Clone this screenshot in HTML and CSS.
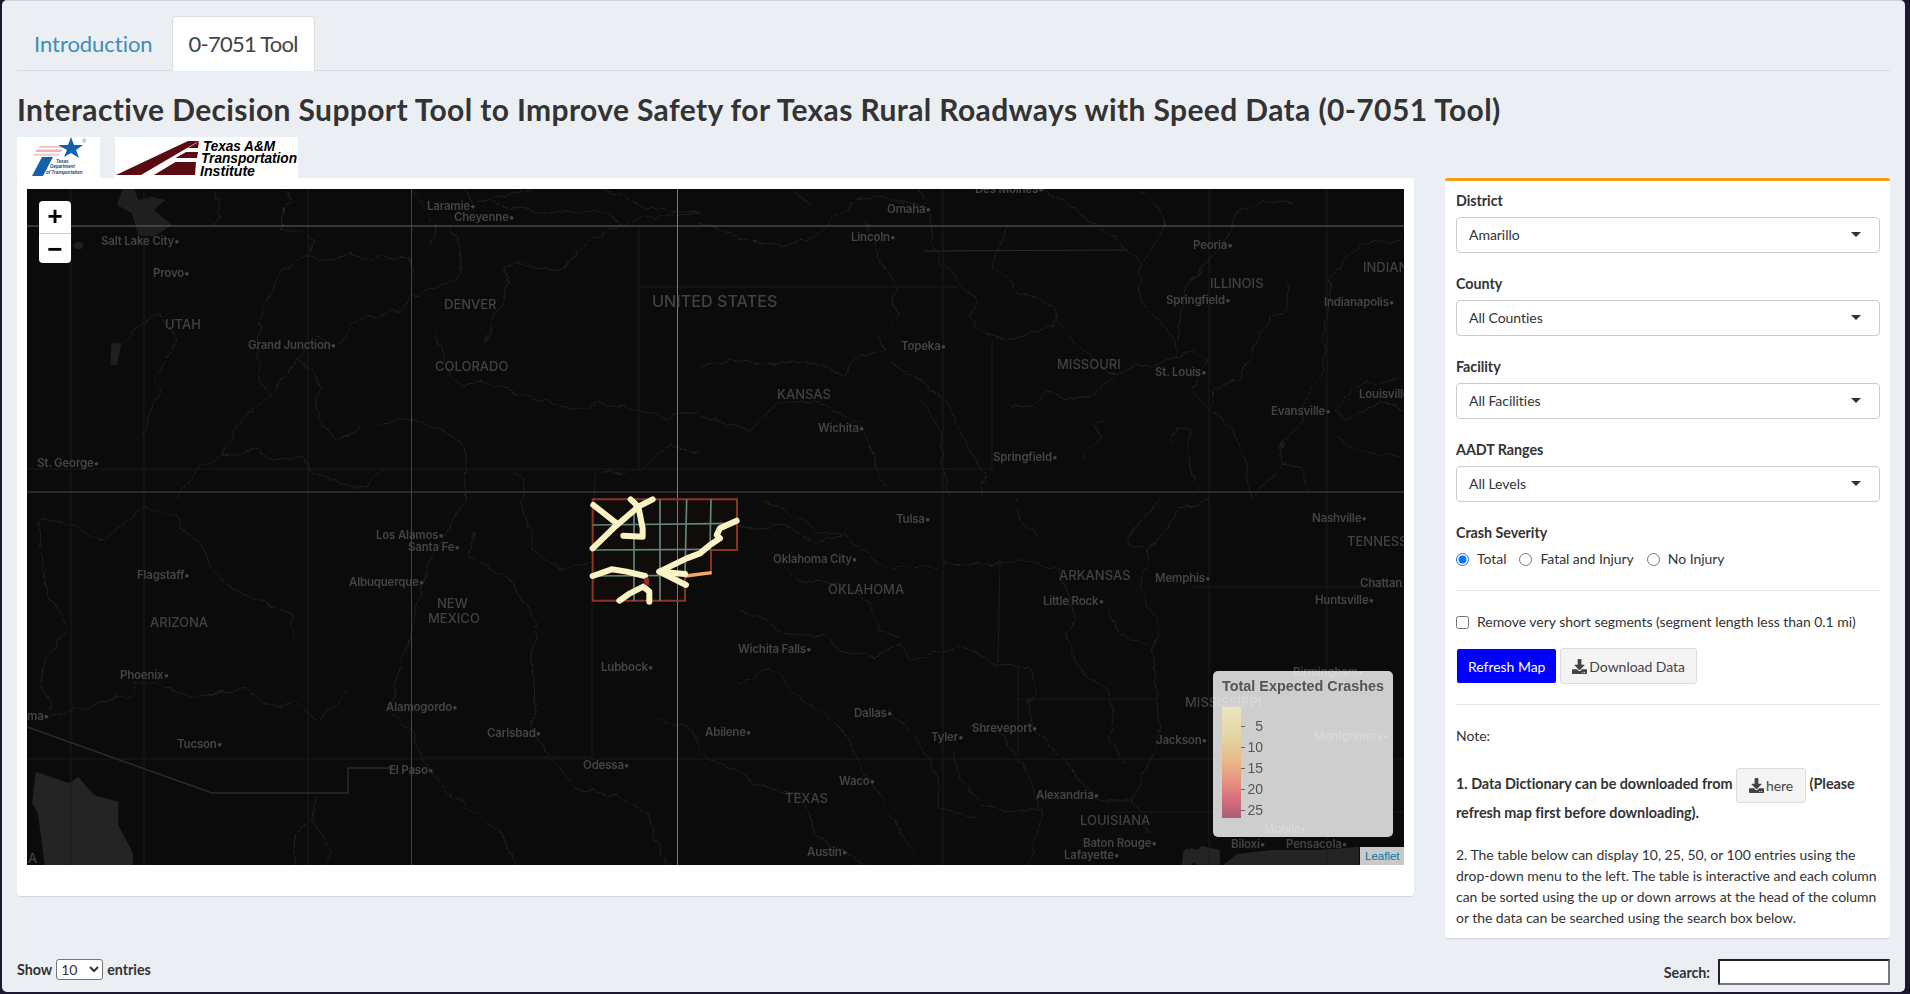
FILE: index.html
```html
<!DOCTYPE html>
<html lang="en">
<head>
<meta charset="utf-8">
<title>0-7051 Tool</title>
<link rel="stylesheet" href="styles.css">
</head>
<body>
<svg class="defs" width="0" height="0" aria-hidden="true">
  <symbol id="dl" viewBox="0 0 512 512"><path d="M216 0h80c13.3 0 24 10.7 24 24v168h87.7c17.8 0 26.7 21.5 14.1 34.1L269.7 378.3c-7.5 7.5-19.8 7.5-27.3 0L90.1 226.1c-12.6-12.6-3.7-34.1 14.1-34.1H192V24c0-13.3 10.7-24 24-24zm296 376v112c0 13.3-10.7 24-24 24H24c-13.3 0-24-10.7-24-24V376c0-13.3 10.7-24 24-24h146.7l49 49c20.1 20.1 52.5 20.1 72.6 0l49-49H488c13.3 0 24 10.7 24 24zm-124 88c0-11-9-20-20-20s-20 9-20 20 9 20 20 20 20-9 20-20zm64 0c0-11-9-20-20-20s-20 9-20 20 9 20 20 20 20-9 20-20z"/></symbol>
</svg>
<div class="app">
  <nav class="tabs">
    <a class="tab">Introduction</a>
    <a class="tab active">0-7051 Tool</a>
  </nav>
  <h1 class="title">Interactive Decision Support Tool to Improve Safety for Texas Rural Roadways with Speed Data (0-7051 Tool)</h1>
  <div class="logos">
    <svg class="logo-tx" viewBox="0 0 83 41" width="83" height="41">
      <path class="tx-s1" d="M24 9h24l-2 2H20z"/>
      <path class="tx-s2" d="M20 12.500h26l-2 2.500H18z"/>
      <path class="tx-s3" d="M17 16.500h26l-1 2.500H16z"/>
      <polygon class="tx-blue" points="54,0 57,8 66,8 59,13 62,21 54,16 47,20 50,13 41,8 51,8"/>
      <polygon class="tx-blue" points="25,20 36,20 26,39 15,39"/>
      <text class="tx-r" x="65" y="6">®</text>
      <text class="tx-t" x="39" y="25.500">Texas</text>
      <text class="tx-t" x="33" y="31">Department</text>
      <text class="tx-t" x="29" y="37">of Transportation</text>
    </svg>
    <svg class="logo-tti" viewBox="0 0 183 41" width="183" height="41">
      <polygon class="tti-m" points="1,38 26,38 84,4 73,4"/>
      <polygon class="tti-m" points="39,38 80,38 81,25 60.500,25"/>
      <polygon class="tti-m" points="60.500,21 82,21 83,15 71,15"/>
      <polygon class="tti-m" points="73,11 83,11 84,4 80,7"/>
      <text class="tti-t" x="88" y="14" textLength="72" lengthAdjust="spacingAndGlyphs">Texas A&amp;M</text>
      <text class="tti-t" x="86" y="26" textLength="96" lengthAdjust="spacingAndGlyphs">Transportation</text>
      <text class="tti-t" x="85" y="39" textLength="55" lengthAdjust="spacingAndGlyphs">Institute</text>
    </svg>
  </div>
  <div class="main">
    <section class="card">
      <div class="map">
        <svg class="map-svg" viewBox="27 189 1377 676" width="1377" height="676">
          <defs>
            <filter id="wiggle" filterUnits="userSpaceOnUse" x="27" y="189" width="1377" height="676">
              <feTurbulence type="fractalNoise" baseFrequency="0.07" numOctaves="3" seed="4"/>
              <feDisplacementMap in="SourceGraphic" scale="9" xChannelSelector="R" yChannelSelector="G"/>
            </filter>
          </defs>
          <g class="fills">
            <g transform="translate(0,180) scale(.4464,.3333)">
              <path class="lake" d="M275 27 L262 75 L295 100 L310 165 L345 170 L385 135 L345 90 L370 60 L340 50 L310 60 L300 27Z"/>
              <circle class="lake" cx="176" cy="197" r="11"/>
              <path class="lake" d="M250 490 L272 490 L262 555 L247 555Z"/>
            </g>
            <g transform="translate(0,500) scale(.4464,.3333)">
              <path d="M80 815 L155 850 L175 830 L210 885 L265 905 L265 975 L298 1060 L298 1095 L100 1095 L85 940 L72 910Z"/>
            </g>
            <g transform="translate(1180,650) scale(.3333)">
              <path d="M130 645 L170 612 L280 600 L420 600 L537 590 L537 645Z"/>
              <path d="M10 612 L30 595 L55 600 L60 630 L30 645 L5 645Z"/>
            </g>
            <g transform="translate(700,500) scale(.3333)">
              <path d="M1470 1070 L1505 1038 L1560 1050 L1560 1094 L1490 1094Z"/>
              <path d="M1447 1060 L1460 1045 L1472 1055 L1460 1072Z"/>
            </g>
          </g>
          <g class="rivers" filter="url(#wiggle)">
            <g transform="translate(0,180) scale(.4464,.3333)">
              <polyline points="690,225 635,270 600,350 583,420 575,530 590,610 603,650"/>
              <polyline points="690,225 710,235 740,240 785,222 830,245 860,228 920,235 928,265 925,300"/>
              <polyline points="480,30 490,110 480,135"/>
              <polyline points="640,30 650,60 635,90 635,130 630,150 670,155 705,180 700,220"/>
              <polyline points="1030,295 975,320 945,350 920,345 900,395 830,405 790,430 770,480 745,497 705,470 665,540 610,640 545,710 515,780 495,830 440,870 395,955"/>
              <polyline points="665,540 700,570 715,620 705,650 715,720 750,780 800,750 810,730"/>
              <polyline points="360,400 320,430 275,490"/>
              <polyline points="360,400 395,480 350,590 355,640 330,720 325,770"/>
              <polyline points="1130,270 1160,245 1200,265 1250,272 1300,210 1330,170 1430,115 1568,100"/>
              <polyline points="1130,270 1140,310 1110,400 1085,490"/>
              <polyline points="1010,135 1030,200 1030,295"/>
              <polyline points="920,30 975,130 965,200"/>
              <polyline points="975,460 1010,590 1040,620 1075,600 1180,645 1275,690 1340,670 1500,710 1568,690"/>
              <polyline points="850,730 920,720 1000,755 1045,800 1040,960"/>
              <polyline points="495,830 570,810 610,840 680,830 695,880 770,915 820,920 865,865"/>
              <polyline points="1145,880 1175,890 1170,960"/>
              <polyline points="1350,30 1470,90 1568,100"/>
              <polyline points="1040,30 1060,70 1190,30"/>
              <polyline points="1100,70 1220,100 1340,90 1400,135"/>
              <polyline points="1340,880 1430,870 1500,790 1568,820"/>
            </g>
            <g transform="translate(700,180) scale(.4592,.3333)">
              <polyline points="480,30 505,120 510,200 525,250 590,345 605,370 585,410 620,465 660,480 770,440 780,420 770,380 700,340 640,260 650,200 675,140"/>
              <polyline points="205,30 240,85"/>
              <polyline points="0,125 100,180 180,200 260,160 340,60 400,50 490,80"/>
              <polyline points="780,420 815,490 860,530 890,585 945,560 985,565 1040,530 1075,515 1100,540 1070,630 1110,690 1165,750 1190,860 1200,960"/>
              <polyline points="1040,530 1030,470 960,370 955,280 965,255 1010,135 1005,100 960,30"/>
              <polyline points="965,255 900,170 790,60 740,30"/>
              <polyline points="1040,480 1050,380 1060,320 1150,170 1175,80 1290,60"/>
              <polyline points="1280,310 1280,390 1240,410 1200,520 1170,600 1120,630 1110,690"/>
              <polyline points="1533,180 1440,190 1370,300 1375,350 1355,480 1360,570 1320,640 1310,720 1265,800 1270,850 1200,960"/>
              <polyline points="1270,850 1310,860 1320,930"/>
              <polyline points="0,560 60,540 140,550 260,550 315,590 335,535 405,510 390,465"/>
              <polyline points="415,545 520,640 550,700 580,790 620,880 610,950"/>
              <polyline points="415,440 435,400 420,370 430,320 395,250 365,130"/>
              <polyline points="0,705 110,750 170,670 250,665 350,730 370,800 390,880 405,920"/>
              <polyline points="480,660 525,750 530,880 540,950"/>
              <polyline points="675,680 720,685 755,640 820,660 850,650 900,590"/>
              <polyline points="880,710 860,730 870,780 830,835"/>
              <polyline points="1025,790 1040,740 1070,750 1060,820 1085,930"/>
              <polyline points="1533,600 1440,610 1380,690 1410,720 1480,660 1533,690"/>
              <polyline points="1380,760 1430,810 1533,830"/>
            </g>
            <g transform="translate(0,500) scale(.4464,.3333)">
              <polyline points="1165,0 1190,100 1190,150 1250,205 1330,190"/>
              <polyline points="1060,95 1050,170 1150,250 1205,370 1190,470 1195,650 1190,680 1230,770 1290,860 1380,890 1450,940 1470,1020 1490,1095"/>
              <polyline points="1040,0 960,190 920,400 885,560 875,640 920,690 950,790 1000,870 1080,960 1130,1000 1155,1095"/>
              <polyline points="85,65 105,280 150,380 100,480 90,550 115,620 100,655"/>
              <polyline points="85,65 120,60 160,70 230,125 320,20 395,50 410,90 450,130 470,200 520,265 610,320 655,340 660,420"/>
              <polyline points="115,650 200,620 270,590 300,600 300,550 350,545 430,595 545,565 625,630 660,605 710,660 780,575"/>
              <polyline points="1470,660 1540,680 1568,740"/>
              <polyline points="710,890 700,960 660,1000 660,1095"/>
              <polyline points="700,960 740,1050 735,1095"/>
            </g>
            <g transform="translate(700,500) scale(.3333)">
              <polyline points="110,330 200,355 240,400 380,405 420,450 520,470 600,430 635,480 790,440 900,495 990,500 1005,570 985,600 1000,680 1100,790"/>
              <polyline points="110,80 170,85 260,75 340,130 430,105 490,155 550,200 690,200 740,200"/>
              <polyline points="190,0 310,60 350,90 430,105"/>
              <polyline points="220,155 290,240 430,250 510,310 540,390 600,410"/>
              <polyline points="730,190 830,190 900,195 960,180 1080,210 1130,360 1100,400 1130,500 1225,570 1240,650 1230,720 1275,790"/>
              <polyline points="1530,0 1440,30 1350,150 1320,260 1380,380 1360,450 1370,600 1380,700 1340,800 1300,900 1350,1000"/>
              <polyline points="1220,330 1260,400 1350,440"/>
              <polyline points="110,550 210,505 300,590 420,680 480,790 530,870 600,990 660,1094"/>
              <polyline points="560,630 660,730 720,840 710,920 830,960"/>
              <polyline points="0,760 100,810 180,860 300,880 335,960 340,1000 400,1040 490,1094"/>
              <polyline points="760,760 780,830 840,910 940,930 1030,930 990,1094"/>
              <polyline points="810,680 910,710 950,770 1000,850 1020,930"/>
              <polyline points="1100,790 1190,900 1290,900"/>
              <polyline points="950,0 960,60 1010,110"/>
              <polyline points="1380,0 1270,120 1340,150"/>
            </g>
          </g>
          <g class="borders">
            <polyline points="639,226 639,469"/>
            <polyline points="639,287 957,287"/>
            <polyline points="27,469 992,469 992,340"/>
            <polyline points="595,469 592,600"/>
            <polyline points="592,600 592,757 423,757"/>
            <polyline points="71,189 71,865"/>
            <polyline points="144,189 144,865"/>
            <polyline points="308,189 308,865"/>
            <polyline points="943,189 943,865"/>
            <polyline points="1209,189 1209,865"/>
            <polyline points="1327,189 1327,865"/>
            <polyline points="1000,560 998,663"/>
            <polyline points="1018,667 1018,757"/>
            <polyline points="1018,699 1155,699"/>
            <polyline points="1113,812 1404,812"/>
            <polyline points="27,759 1404,759"/>
            <polyline points="1192,587 1404,587"/>
          </g>
          <polyline class="border-hi" points="924,251 1127,250"/>
          <polyline class="mexico" points="27,727 212,793 348,793 348,768 393,768"/>
          <line class="grid-a" x1="27" y1="226" x2="1404" y2="226"/>
          <line class="grid-b" x1="27" y1="492" x2="1404" y2="492"/>
          <line class="grid-c" x1="411.500" y1="189" x2="411.500" y2="865"/>
          <line class="grid-d" x1="677.500" y1="189" x2="677.500" y2="865"/>

          <g class="city">
            <text x="975" y="193">Des Moines•</text>
            <text x="101" y="245">Salt Lake City•</text>
            <text x="153" y="277">Provo•</text>
            <text x="427" y="210">Laramie•</text>
            <text x="454" y="221">Cheyenne•</text>
            <text x="248" y="349">Grand Junction•</text>
            <text x="37" y="467">St. George•</text>
            <text x="887" y="213">Omaha•</text>
            <text x="851" y="241">Lincoln•</text>
            <text x="1193" y="249">Peoria•</text>
            <text x="1166" y="304">Springfield•</text>
            <text x="1324" y="306">Indianapolis•</text>
            <text x="901" y="350">Topeka•</text>
            <text x="1155" y="376">St. Louis•</text>
            <text x="818" y="432">Wichita•</text>
            <text x="1359" y="398">Louisville</text>
            <text x="1271" y="415">Evansville•</text>
            <text x="993" y="461">Springfield•</text>
            <text x="896" y="523">Tulsa•</text>
            <text x="773" y="563">Oklahoma City•</text>
            <text x="1155" y="582">Memphis•</text>
            <text x="1043" y="605">Little Rock•</text>
            <text x="738" y="653">Wichita Falls•</text>
            <text x="854" y="717">Dallas•</text>
            <text x="705" y="736">Abilene•</text>
            <text x="972" y="732">Shreveport•</text>
            <text x="931" y="741">Tyler•</text>
            <text x="1156" y="744">Jackson•</text>
            <text x="839" y="785">Waco•</text>
            <text x="1036" y="799">Alexandria•</text>
            <text x="1083" y="847">Baton Rouge•</text>
            <text x="1064" y="859">Lafayette•</text>
            <text x="807" y="856">Austin•</text>
            <text x="1293" y="676">Birmingham•</text>
            <text x="1314" y="740">Montgomery•</text>
            <text x="1264" y="833">Mobile•</text>
            <text x="1231" y="848">Biloxi•</text>
            <text x="1286" y="848">Pensacola•</text>
            <text x="1312" y="522">Nashville•</text>
            <text x="1360" y="587">Chattan</text>
            <text x="1315" y="604">Huntsville•</text>
            <text x="376" y="539">Los Alamos•</text>
            <text x="408" y="551">Santa Fe•</text>
            <text x="137" y="579">Flagstaff•</text>
            <text x="349" y="586">Albuquerque•</text>
            <text x="120" y="679">Phoenix•</text>
            <text x="601" y="671">Lubbock•</text>
            <text x="386" y="711">Alamogordo•</text>
            <text x="487" y="737">Carlsbad•</text>
            <text x="27" y="720">ma•</text>
            <text x="177" y="748">Tucson•</text>
            <text x="389" y="774">El Paso•</text>
            <text x="583" y="769">Odessa•</text>
          </g>
          <g class="state">
            <text x="165" y="329">UTAH</text>
            <text x="444" y="309">DENVER</text>
            <text x="435" y="371">COLORADO</text>
            <text x="1363" y="272">INDIANA</text>
            <text x="1210" y="288">ILLINOIS</text>
            <text x="1057" y="369">MISSOURI</text>
            <text x="777" y="399">KANSAS</text>
            <text x="828" y="594">OKLAHOMA</text>
            <text x="1059" y="580">ARKANSAS</text>
            <text x="785" y="803">TEXAS</text>
            <text x="1080" y="825">LOUISIANA</text>
            <text x="1185" y="707">MISSISSIPPI</text>
            <text x="1347" y="546">TENNESS</text>
            <text x="437" y="608">NEW</text>
            <text x="428" y="623">MEXICO</text>
            <text x="150" y="627">ARIZONA</text>
            <text x="28" y="863">A</text>
            <text class="country" x="652" y="307">UNITED STATES</text>
          </g>

          <g transform="translate(560,470) scale(.3333)">
            <g class="ov-red">
              <polygon points="98,88 531,88 531,240 453,240 453,310 375,320 375,392 98,392"/>
            </g>
            <g class="ov-green">
              <line x1="98" y1="165" x2="531" y2="160"/>
              <line x1="98" y1="240" x2="453" y2="238"/>
              <line x1="98" y1="318" x2="375" y2="316"/>
              <line x1="222" y1="88" x2="222" y2="392"/>
              <line x1="300" y1="88" x2="300" y2="392"/>
              <line x1="380" y1="88" x2="375" y2="320"/>
              <line x1="453" y1="88" x2="450" y2="240"/>
            </g>
            <polyline class="ov-orange" points="375,318 455,308"/>
            <g class="ov-yellow">
              <polyline points="98,235 165,170 235,110 278,88"/>
              <polyline points="100,105 170,160"/>
              <polyline points="212,88 235,110 248,175 248,200 190,197"/>
              <polyline points="530,152 480,175 470,195 480,205 450,225 420,250 380,265 298,305 375,312"/>
              <polyline points="298,305 378,345"/>
              <polyline points="98,318 155,298 200,305 255,318"/>
              <polyline points="178,392 210,370 250,350 268,365 268,395"/>
            </g>
            <line class="ov-dot" x1="260" y1="330" x2="260" y2="338"/>
          </g>
        </svg>
        <div class="zoom-ctl">
          <span class="zoom-btn">+</span>
          <span class="zoom-btn">−</span>
        </div>
        <div class="legend">
          <div class="legend-title">Total Expected Crashes</div>
          <div class="legend-body">
            <div class="legend-bar"></div>
            <ul class="legend-ticks">
              <li>5</li><li>10</li><li>15</li><li>20</li><li>25</li>
            </ul>
          </div>
        </div>
        <div class="attrib">Leaflet</div>
      </div>
    </section>
    <aside class="side">
      <div class="field"><label class="lbl">District</label><div class="select">Amarillo</div></div>
      <div class="field"><label class="lbl">County</label><div class="select">All Counties</div></div>
      <div class="field"><label class="lbl">Facility</label><div class="select">All Facilities</div></div>
      <div class="field"><label class="lbl">AADT Ranges</label><div class="select">All Levels</div></div>
      <label class="lbl">Crash Severity</label>
      <div class="radios">
        <label class="opt"><input type="radio" name="sev" checked>Total</label>
        <label class="opt"><input type="radio" name="sev">Fatal and Injury</label>
        <label class="opt"><input type="radio" name="sev">No Injury</label>
      </div>
      <hr class="rule">
      <label class="opt check"><input type="checkbox">Remove very short segments (segment length less than 0.1 mi)</label>
      <div class="btns">
        <button class="btn primary">Refresh Map</button>
        <button class="btn"><svg class="ico"><use href="#dl"/></svg>Download Data</button>
      </div>
      <hr class="rule rule2">
      <p class="note">Note:</p>
      <p class="note1">1. Data Dictionary can be downloaded from <button class="btn here"><svg class="ico"><use href="#dl"/></svg>here</button> (Please refresh map first before downloading).</p>
      <p class="note2">2. The table below can display 10, 25, 50, or 100 entries using the drop-down menu to the left. The table is interactive and each column can be sorted using the up or down arrows at the head of the column or the data can be searched using the search box below.</p>
    </aside>
  </div>
  <div class="foot">
    <label class="foot-l">Show <select class="len"><option>10</option><option>25</option><option>50</option><option>100</option></select> entries</label>
    <label class="foot-r">Search: <input class="search" type="search"></label>
  </div>
</div>
</body>
</html>
```
FILE: styles.css
```css
* { box-sizing: border-box; }
html, body { margin: 0; height: 994px; overflow: hidden; }
body { background: #1c1830; font-family: "Lato", "Noto Sans", sans-serif; font-size: 14px; letter-spacing: -.04px; color: #333; }
.defs { position: absolute; }
.app { margin: 0 5px 0 2px; height: 992px; background: #ebeff4; border-top: 1px solid #d0d4db; border-radius: 5px; padding: 15px 15px 0; overflow: hidden; }

.tabs { display: flex; height: 55px; border-bottom: 1px solid #d8dce1; gap: 2px; }
.tab { font-size: 22px; line-height: 54px; padding: 0 16px; color: #3c8dbc; height: 55px; border: 1px solid transparent; border-bottom: 0; border-radius: 4px 4px 0 0; }
.tab.active { color: #444; background: #fff; border-color: #ddd; letter-spacing: -.75px; }

.title { margin: 18px 0 8px; font-size: 30px; line-height: 40px; font-weight: 700; letter-spacing: .38px; color: #333; white-space: nowrap; }

.logos { display: flex; gap: 15px; height: 41px; }
.logos svg { display: block; background: #fff; }
.tx-blue { fill: #1261ae; }
.tx-s1 { fill: #f3c8cc; }
.tx-s2 { fill: #eeb4ba; }
.tx-s3 { fill: #f3d0d2; }
.tx-r { font: 6px "Liberation Sans", sans-serif; fill: #5577aa; }
.tx-t { font: italic 700 4.500px "Liberation Sans", sans-serif; fill: #27467a; }
.tti-m { fill: #5a0a12; }
.tti-t { font: italic 700 14.500px "Liberation Sans", sans-serif; fill: #000; }

.main { display: grid; grid-template-columns: 1397px 445px; gap: 31px; align-items: start; }
.card { background: #fff; height: 718px; padding: 11px 10px; border-radius: 3px; box-shadow: 0 1px 1px rgba(0,0,0,.1); }
.map { position: relative; width: 1377px; height: 676px; background: #0b0b0b; overflow: hidden; }
.map-svg { display: block; }

.fills path, .fills circle { fill: #242424; }
.fills .lake { fill: #1f1f1f; }
.rivers polyline { fill: none; stroke: #262626; stroke-width: .8; stroke-linejoin: round; vector-effect: non-scaling-stroke; }
.borders polyline { fill: none; stroke: #1b1b1b; stroke-width: 1; }
.border-hi { fill: none; stroke: #2a2a2a; stroke-width: 1; }
.mexico { fill: none; stroke: #2b2b2b; stroke-width: 1.500; }
.grid-a { stroke: #666; stroke-width: 1; }
.grid-b { stroke: #4a4a4a; stroke-width: 1; }
.grid-c { stroke: #444; stroke-width: 1; }
.grid-d { stroke: #7a7a7a; stroke-width: 1; }
.city text { font: 600 11.500px "Inter", sans-serif; fill: #444; letter-spacing: -.2px; }
.state text { font: 500 13px "Inter", sans-serif; fill: #424242; letter-spacing: 0; }
.state .country { font-size: 16.200px; }

.ov-red polygon { fill: rgba(120,40,20,.05); stroke: #8b3420; stroke-width: 6; }
.ov-green line { stroke: #65877a; stroke-width: 5; }
.ov-orange { fill: none; stroke: #f1a868; stroke-width: 10; }
.ov-yellow polyline { fill: none; stroke: #fbf4c2; stroke-width: 18; stroke-linecap: round; stroke-linejoin: round; }
.ov-dot { stroke: #9a2a28; stroke-width: 15; stroke-linecap: round; }

.zoom-ctl { position: absolute; left: 12px; top: 12px; width: 32px; height: 62px; background: #fff; border-radius: 4px; display: flex; flex-direction: column; }
.zoom-btn { flex: 1; display: flex; align-items: center; justify-content: center; padding-top: 2px; font: 700 26px "Liberation Mono", monospace; color: #000; }
.zoom-btn + .zoom-btn { border-top: 1px solid #ccc; }

.legend { position: absolute; left: 1186px; top: 482px; width: 180px; height: 166px; padding: 8px 9px; background: rgba(255,255,255,.8); border-radius: 5px; font-family: "Liberation Sans", sans-serif; letter-spacing: 0; color: #555; }
.legend-title { font-size: 14.400px; font-weight: 700; line-height: 14px; white-space: nowrap; }
.legend-body { display: flex; margin-top: 14px; }
.legend-bar { width: 19px; height: 111px; background: linear-gradient(#eae6bb 0%, #e6d6a6 25%, #e8bd8c 45%, #e89c80 63%, #d9707a 82%, #a85f76 100%); }
.legend-ticks { list-style: none; margin: 9px 0 0; padding: 0; width: 22px; font-size: 14px; line-height: 21px; text-align: right; }
.legend-ticks li { position: relative; height: 21px; }
.legend-ticks li::before { content: ""; position: absolute; left: 0; top: 10px; width: 4px; height: 1px; background: #666; }
.attrib { position: absolute; right: 0; bottom: 0; width: 44px; height: 18px; padding-left: 5px; background: #c9c9c9; font: 11.500px/18px "Liberation Sans", sans-serif; letter-spacing: 0; color: #0078a8; }

.side { background: #fff; height: 760px; border-top: 3px solid #f39c12; border-radius: 3px; padding: 10px 10px 0 11px; box-shadow: 0 1px 1px rgba(0,0,0,.1); }
.lbl { display: block; font-size: 14.300px; font-weight: 700; line-height: 20px; margin-bottom: 6px; color: #333; }
.field { margin-bottom: 21px; }
.select { position: relative; height: 36px; line-height: 34px; padding-left: 12px; background: #fff; border: 1px solid #ccc; border-radius: 4px; color: #333; }
.select::after { content: ""; position: absolute; right: 18px; top: 14px; border: 5px solid transparent; border-top: 5px solid #333; border-bottom: 0; }
.radios { display: flex; gap: 13px; height: 20px; align-items: center; }
.opt { display: flex; align-items: center; line-height: 20px; }
.opt input { width: 13px; height: 13px; margin: 0 8px 0 0; }
.rule { border: 0; border-top: 1px solid #e6e6e6; margin: 21px 0; }
.check { height: 20px; white-space: nowrap; }
.btns { display: flex; gap: 3px; margin-top: 16px; }
.btn { display: inline-flex; align-items: center; height: 36px; padding: 0 11px; font: inherit; letter-spacing: inherit; color: #444; background: #f4f4f4; border: 1px solid #ddd; border-radius: 3px; }
.primary { color: #fff; background: #0000ff; border-color: #fff; }
.ico { width: 15px; height: 15px; margin-right: 2px; fill: #444; }
.rule2 { margin: 20px 0 21px; }
.note { margin: 0 0 22px; line-height: 20px; }
.note1 { margin: 0 0 22px; font-size: 14.400px; font-weight: 700; line-height: 19px; }
.here { height: 35px; vertical-align: middle; font-weight: 400; font-size: 14px; padding: 0 12px; margin: 0; }
.note2 { margin: 0; line-height: 21px; }

.foot { display: flex; justify-content: space-between; align-items: flex-start; margin-top: 21px; height: 26px; font-size: 14.300px; font-weight: 700; }
.foot-l, .foot-r { display: flex; align-items: center; gap: 4px; }
.foot-r { gap: 8px; }
.len { width: 47px; height: 21px; font: 400 14px "Lato", sans-serif; background: #fff; color: #333; border: 1px solid #767676; border-radius: 3px; }
.search { width: 172px; height: 26px; background: #fff; border-width: 2px; border-style: solid; border-color: #222 #777 #777 #222; padding: 0; }
```
